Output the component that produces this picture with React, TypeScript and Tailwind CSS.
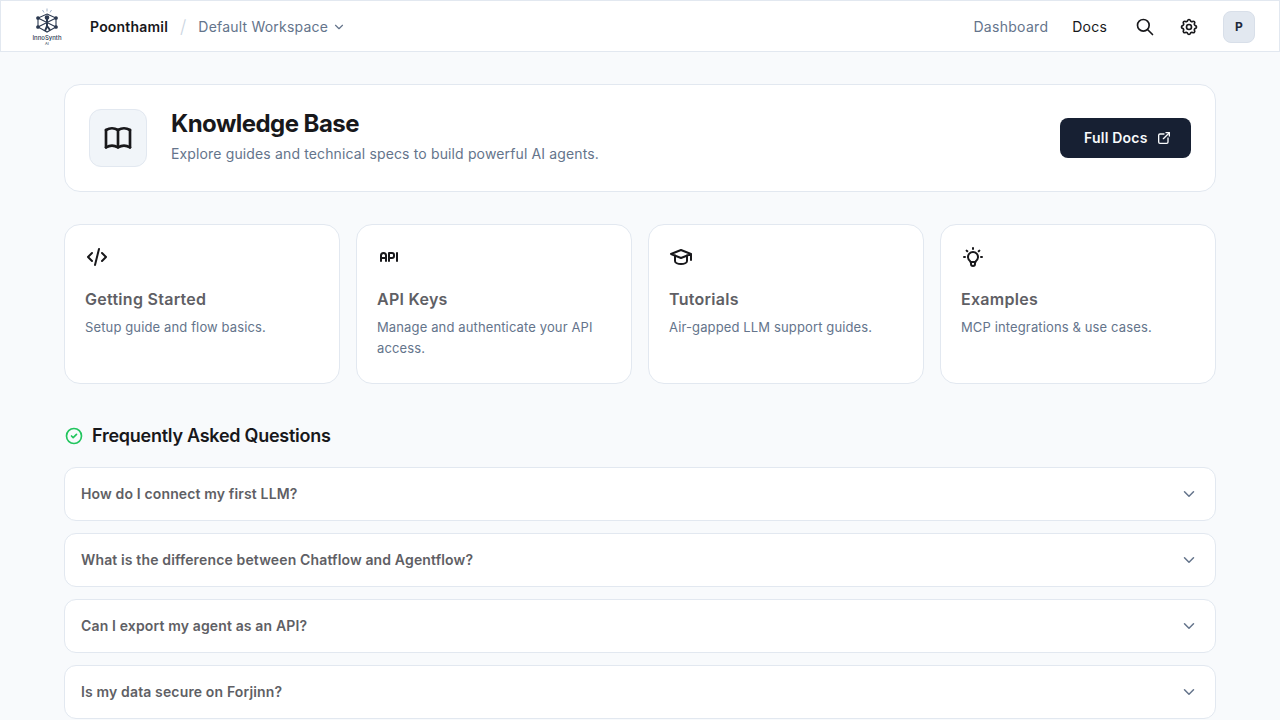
import { ChevronDown } from 'lucide-react'
import {
  TbApi,
  TbBook,
  TbBulb,
  TbCircleCheck,
  TbCode,
  TbExternalLink,
  TbSchool,
  TbSearch,
  TbSettings,
} from 'react-icons/tb'

const cards = [
  { icon: TbCode, title: 'Getting Started', text: 'Setup guide and flow basics.' },
  { icon: TbApi, title: 'API Keys', text: 'Manage and authenticate your API access.' },
  { icon: TbSchool, title: 'Tutorials', text: 'Air-gapped LLM support guides.' },
  { icon: TbBulb, title: 'Examples', text: 'MCP integrations & use cases.' },
]

const faqs = [
  'How do I connect my first LLM?',
  'What is the difference between Chatflow and Agentflow?',
  'Can I export my agent as an API?',
  'Is my data secure on Forjinn?',
]

function Logo() {
  return (
    <div className="flex w-[32px] flex-col items-center">
      <svg width="24" height="26" viewBox="0 0 24 26" fill="none" stroke="#2b3950" strokeWidth="1.1">
        <path d="M12 6 L21 10 V19 L12 24 L3 19 V10 Z" />
        <path d="M3 10 L21 19 M21 10 L3 19" />
        <circle cx="12" cy="9.5" r="1.8" fill="#2b3950" />
        <path d="M12 11 V18 L10 23 M12 18 L15 22" strokeWidth="2" />
        <path d="M12 0.5 V3.5 M7.5 2 L9 4.5 M16.5 2 L15 4.5" stroke="#8aa0bb" strokeWidth="0.8" />
        <circle cx="3" cy="10" r="1.3" fill="#2b3950" />
        <circle cx="21" cy="10" r="1.3" fill="#2b3950" />
        <circle cx="3" cy="19" r="1.3" fill="#2b3950" />
        <circle cx="21" cy="19" r="1.3" fill="#2b3950" />
      </svg>
      <span className="text-[6px] leading-[7px] font-medium text-[#2b3950]">InnoSynth</span>
      <span className="text-[4px] leading-[5px] text-[#2b3950]">AI</span>
    </div>
  )
}

export default function App() {
  return (
    <div className="h-[720px] overflow-hidden bg-[#f8fafc] font-['Inter',sans-serif] text-[#18181b]">
      {/* Header */}
      <header className="flex h-[52px] items-center justify-between border border-[#e2e8f0] bg-white pt-[2px] pr-[24px] pl-[30px]">
        <div className="flex items-center">
          <Logo />
          <span className="ml-[27px] text-sm font-semibold tracking-[0.2px] text-[#18181b]">Poonthamil</span>
          <span className="ml-[12px] text-lg leading-none font-light text-[#cbd5e1]">/</span>
          <span className="ml-[12px] text-sm tracking-[0.2px] text-[#64748b]">Default Workspace</span>
          <ChevronDown className="ml-[4px] h-[14px] w-[14px] text-[#64748b]" />
        </div>
        <div className="flex items-center">
          <span className="text-sm tracking-[0.3px] text-[#64748b]">Dashboard</span>
          <span className="ml-[24px] text-sm tracking-[0.2px] text-[#18181b]">Docs</span>
          <TbSearch className="ml-[28px] h-[20px] w-[20px] text-[#18181b]" />
          <TbSettings className="ml-[24px] h-[20px] w-[20px] text-[#18181b]" />
          <div className="ml-[24px] flex h-[32px] w-[32px] items-center justify-center rounded-lg border border-[#d8dfe9] bg-[#e2e8f0] text-xs font-bold text-[#1e293b]">
            P
          </div>
        </div>
      </header>

      <main className="px-16 pt-8">
        {/* Hero */}
        <section className="flex h-[108px] items-center justify-between rounded-2xl border border-[#e2e8f0] bg-white px-6">
          <div className="flex items-center gap-6">
            <div className="flex h-[58px] w-[58px] items-center justify-center rounded-xl border border-[#e2e8f0] bg-[#f1f5f9]">
              <TbBook className="h-[32px] w-[32px] text-[#18181b]" />
            </div>
            <div>
              <h1 className="text-2xl leading-[24px] font-bold tracking-[-0.55px] text-[#18181b]">Knowledge Base</h1>
              <p className="mt-2 text-sm tracking-[0.14px] text-[#64748b]">
                Explore guides and technical specs to build powerful AI agents.
              </p>
            </div>
          </div>
          <button className="flex h-[40px] w-[131px] items-center gap-2 rounded-lg bg-[#172033] pl-[24px] text-sm font-semibold tracking-[0.22px] text-[#f8fafc]">
            Full Docs
            <TbExternalLink className="h-[16px] w-[16px]" />
          </button>
        </section>

        {/* Cards */}
        <section className="mt-8 grid grid-cols-4 gap-4">
          {cards.map((card) => (
            <div key={card.title} className="h-[160px] rounded-2xl border border-[#e2e8f0] bg-white px-5 pt-5">
              <card.icon className="h-[24px] w-[24px] text-[#18181b]" />
              <h3 className="mt-[18px] text-base leading-[24px] font-semibold tracking-[0.28px] text-[#5f5f65]">
                {card.title}
              </h3>
              <p className="mt-[6px] text-[13px] leading-[21px] tracking-[0.13px] text-[#64748b]">{card.text}</p>
            </div>
          ))}
        </section>

        {/* FAQ */}
        <section className="mt-[38px]">
          <div className="flex items-center gap-2">
            <TbCircleCheck className="h-5 w-5 text-[#22c55e]" />
            <h2 className="text-lg leading-[28px] font-semibold tracking-[-0.26px] text-[#18181b]">
              Frequently Asked Questions
            </h2>
          </div>
          <div className="mt-[17px] flex flex-col gap-3">
            {faqs.map((q) => (
              <div
                key={q}
                className="flex h-[54px] shrink-0 items-center justify-between rounded-xl border border-[#e2e8f0] bg-white pr-[17px] pl-4"
              >
                <span className="text-sm font-semibold tracking-[0.14px] text-[#5f5f65]">{q}</span>
                <ChevronDown className="h-[18px] w-[18px] text-[#64748b]" />
              </div>
            ))}
          </div>
        </section>
      </main>
    </div>
  )
}
